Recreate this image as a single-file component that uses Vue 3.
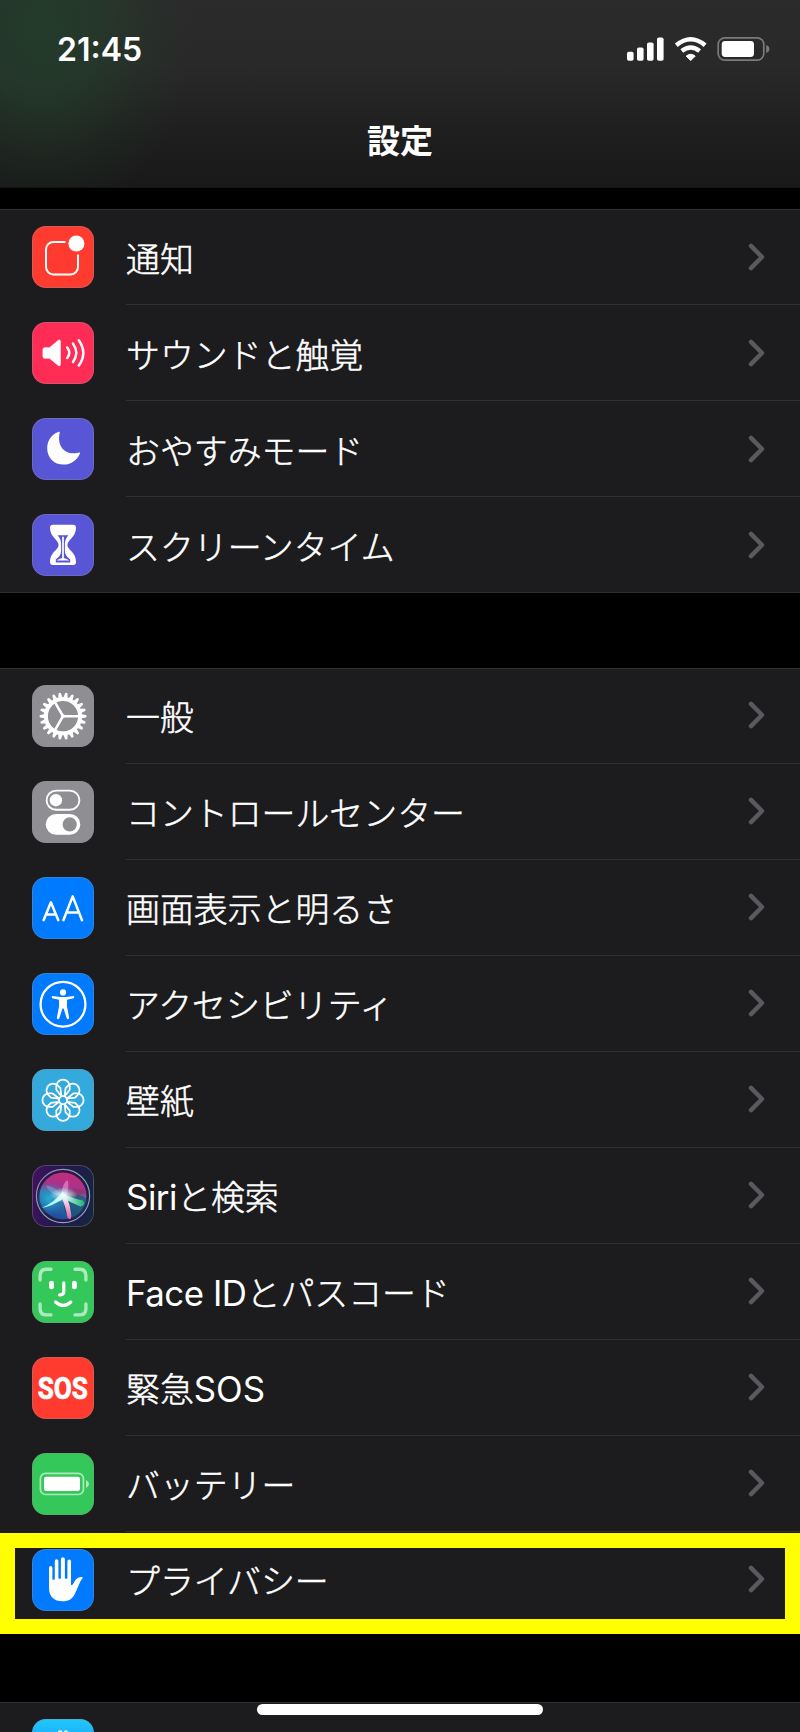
<script setup>
const sections = [
  {
    id: 'alerts',
    rows: [
      { icon: 'bell', text: '通知' },
      { icon: 'sound', text: 'サウンドと触覚' },
      { icon: 'moon', text: 'おやすみモード' },
      { icon: 'hourglass', text: 'スクリーンタイム' }
    ]
  },
  {
    id: 'device',
    rows: [
      { icon: 'gear', text: '一般' },
      { icon: 'toggles', text: 'コントロールセンター' },
      { icon: 'display', text: '画面表示と明るさ' },
      { icon: 'access', text: 'アクセシビリティ' },
      { icon: 'flower', text: '壁紙' },
      { icon: 'siri', lead: 'Siri', text: 'と検索' },
      { icon: 'face', lead: 'Face ID', text: 'とパスコード' },
      { icon: 'sos', text: '緊急', tail: 'SOS' },
      { icon: 'battery', text: 'バッテリー' },
      { icon: 'hand', text: 'プライバシー', marked: true }
    ]
  },
  { id: 'store', rows: [{ icon: 'store', text: '' }] }
]
const teeth = Array.from({ length: 22 }, (_, i) => (i * 360) / 22)
const petals = Array.from({ length: 8 }, (_, i) => i * 45)
</script>

<template>
  <div class="phone">
    <header class="top">
      <div class="status">
        <span class="clock">21:45</span>
        <svg class="signals" width="144" height="26" viewBox="0 0 144 26">
          <g fill="#fff">
            <rect x="1" y="15.7" width="6.6" height="9.1" rx="1.8" />
            <rect x="11" y="11.4" width="6.6" height="13.4" rx="1.8" />
            <rect x="21" y="6.5" width="6.6" height="18.3" rx="1.8" />
            <rect x="31" y="1.5" width="6.6" height="23.3" rx="1.8" />
            <path d="M64.7 24.6 L60.2 20.1 Q64.7 16.4 69.2 20.1Z" stroke="#fff" stroke-width="1" stroke-linejoin="round" />
          </g>
          <g fill="none" stroke="#fff" stroke-width="4.4">
            <path d="M50.3 9.2 Q64.7 -2.8 79.1 9.2" />
            <path d="M55.8 15 Q64.7 7.8 73.6 15" />
          </g>
          <rect x="92.2" y="1.8" width="45.6" height="22.4" rx="6.6" fill="none" stroke="#7b7b7b" stroke-width="1.7" />
          <rect x="95.7" y="5" width="32.3" height="16" rx="3.4" fill="#fff" />
          <path d="M140.2 9 Q143.4 10.2 143.4 13 T140.2 17Z" fill="#7b7b7b" />
        </svg>
      </div>
      <h1 class="title">設定</h1>
    </header>

    <main class="list">
      <section v-for="s in sections" :key="s.id" class="group" :class="'group-' + s.id">
        <div v-for="r in s.rows" :key="r.icon" class="row">
          <div class="tile" :class="'tile-' + r.icon">
            <svg width="62" height="62" viewBox="0 0 62 62">
              <g v-if="r.icon === 'bell'">
                <path d="M33.5 16H21.5A7.4 7.4 0 0 0 14 23.4V41A7.4 7.4 0 0 0 21.5 48.4H38.6A7.4 7.4 0 0 0 46 41V28.5" fill="none" stroke="#fff" stroke-width="2" />
                <circle cx="44.4" cy="17.5" r="8" fill="#fff" />
              </g>
              <g v-else-if="r.icon === 'sound'">
                <path d="M12.7 25.8H17.5L26.4 18.3Q28.3 17.2 28.3 19.5V42.3Q28.3 44.6 26.4 43.5L17.5 36.2H12.7Q11 36.2 11 34.5V27.5Q11 25.8 12.7 25.8Z" fill="#fff" stroke="#fff" stroke-width=".8" />
                <g fill="none" stroke="#fff" stroke-width="2.5" stroke-linecap="round">
                  <path d="M35.2 25.6Q39.3 31 35.2 36" />
                  <path d="M41 21.6Q47.6 31 41 40" />
                  <path d="M46.8 18.2Q55.8 31 46.8 43.6" />
                </g>
              </g>
              <path v-else-if="r.icon === 'moon'" d="M26.3 14C27.6 13.6 28 14 27.6 15.2C24.8 28.8 33.4 37.8 46.4 34.7C48 34.2 48.3 34.8 47.7 36C44.6 42.8 38.8 46.6 31.5 46.6C22 46.6 15.2 39.6 15.2 30.2C15.2 22.7 19.4 16.5 26.3 14Z" fill="#fff" />
              <g v-else-if="r.icon === 'hourglass'">
                <path d="M21 10.7H41Q44 10.7 44 13.7C44 23 35.4 25.8 35.4 31C35.4 36 44 38 44 47.8Q44 51 41 51H21Q18 51 18 47.8C18 38 26.6 36 26.6 31C26.6 25.8 18 23 18 13.7Q18 10.7 21 10.7Z" fill="#fff" />
                <path d="M25.6 21.2H36.4Q32.9 25 32.9 29.5V37.5Q32.9 41.5 38.2 45.4V48.4H23.8V45.4Q29.1 41.5 29.1 37.5V29.5Q29.1 25 25.6 21.2Z" fill="#5856d6" />
                <path d="M31 22.8V45" stroke="#fff" stroke-width="1.7" />
                <path d="M24.6 46.6Q31 41.4 37.4 46.6Z" fill="#fff" />
              </g>
              <g v-else-if="r.icon === 'gear'" transform="translate(31 31.2)">
                <path v-for="a in teeth" :key="a" :transform="`rotate(${a})`" d="M17.5 -2.3L23 -1.2Q24.2 0 23 1.2L17.5 2.3Z" fill="#fff" />
                <circle r="17.1" fill="none" stroke="#fff" stroke-width="4" />
                <path d="M0 0H17M0 0L-8.3 -14.4M0 0L-8.3 14.4" stroke="#fff" stroke-width="2.6" />
                <circle r="2" fill="#fff" />
              </g>
              <g v-else-if="r.icon === 'toggles'">
                <rect x="14.6" y="9.6" width="32.8" height="19.2" rx="9.6" fill="none" stroke="#fff" stroke-width="1.9" />
                <circle cx="23.9" cy="19.2" r="6.2" fill="#fff" />
                <rect x="13.7" y="33" width="34.6" height="20.8" rx="10.4" fill="#fff" />
                <circle cx="37.7" cy="43.4" r="7.1" fill="#8e8e93" />
              </g>
              <g v-else-if="r.icon === 'display'" fill="none" stroke="#fff" stroke-width="2.5" stroke-linecap="round" stroke-linejoin="round">
                <path d="M11.6 43.2L18.9 25.3L26.3 43.2M14.2 37.6H23.7" />
                <path d="M31.4 43.2L40.7 19.4L50 43.2M34.7 35.6H46.7" />
              </g>
              <g v-else-if="r.icon === 'access'">
                <circle cx="31" cy="31.2" r="22.4" fill="none" stroke="#fff" stroke-width="2.3" />
                <circle cx="31" cy="19.4" r="3.1" fill="#fff" />
                <path d="M20.4 22.9L28 24.1H34L41.6 22.9Q43 23.8 41.8 25.2L35 26.8V33.5L37.2 45Q36.2 47 34.8 45.6L31.6 35.5H30.4L27.2 45.6Q25.8 47 24.8 45L27 33.5V26.8L20.2 25.2Q19 23.8 20.4 22.9Z" fill="#fff" />
              </g>
              <g v-else-if="r.icon === 'flower'" transform="translate(31 31.2)" fill="none" stroke="#fff" stroke-width="1.75" stroke-linejoin="round">
                <path v-for="a in petals" :key="a" :transform="`rotate(${a})`" d="M0 -20.6A6.7 6.7 0 0 1 6.7 -13.9V-10.4L1.7 -4H-1.7L-6.7 -10.4V-13.9A6.7 6.7 0 0 1 0 -20.6Z" />
              </g>
              <g v-else-if="r.icon === 'siri'">
                <defs>
                  <linearGradient id="orb" x1=".6" y1="0" x2=".4" y2="1">
                    <stop offset="0" stop-color="#c52c78" />
                    <stop offset=".3" stop-color="#a5348d" />
                    <stop offset=".52" stop-color="#3a7fae" />
                    <stop offset="1" stop-color="#1b4a9a" />
                  </linearGradient>
                  <radialGradient id="cyan">
                    <stop offset="0" stop-color="#1fb6dc" stop-opacity=".9" />
                    <stop offset="1" stop-color="#1689bd" stop-opacity="0" />
                  </radialGradient>
                  <radialGradient id="flare">
                    <stop offset="0" stop-color="#fff" />
                    <stop offset=".3" stop-color="#d9fbff" stop-opacity=".75" />
                    <stop offset="1" stop-color="#b8f4ff" stop-opacity="0" />
                  </radialGradient>
                  <linearGradient id="rim" x1="0" y1="0" x2="1" y2="1">
                    <stop offset="0" stop-color="#a273b8" />
                    <stop offset=".55" stop-color="#76bda0" />
                    <stop offset="1" stop-color="#8b93d8" />
                  </linearGradient>
                  <linearGradient id="ray-left" x1="0" y1="1" x2="1" y2="0">
                    <stop offset="0" stop-color="#8df5ee" />
                    <stop offset="1" stop-color="#fff" />
                  </linearGradient>
                  <linearGradient id="ray-right" x1="0" y1="0" x2="1" y2="0">
                    <stop offset="0" stop-color="#e8fffa" />
                    <stop offset="1" stop-color="#1fb774" />
                  </linearGradient>
                  <linearGradient id="ray-down" x1="0" y1="0" x2="0" y2="1">
                    <stop offset="0" stop-color="#fff" />
                    <stop offset="1" stop-color="#df5fa4" />
                  </linearGradient>
                  <clipPath id="ball"><circle cx="31" cy="31" r="25.5" /></clipPath>
                </defs>
                <circle cx="31" cy="31" r="26.6" fill="#2b1748" stroke="url(#rim)" stroke-width="1.2" />
                <g clip-path="url(#ball)">
                  <circle cx="31" cy="31" r="23.5" fill="url(#orb)" />
                  <circle cx="17" cy="34" r="16" fill="url(#cyan)" />
                  <ellipse cx="45" cy="42" rx="13" ry="12" fill="#14475e" opacity=".5" />
                  <path d="M31 30Q44 19 54 27Q49 31.5 33 31Z" fill="#8e3562" opacity=".7" />
                  <path d="M31 31Q20 19 14 21Q19 31 31 31Z" fill="#9aa2d8" opacity=".5" />
                  <path d="M29 30Q31 17 35.5 15Q38 21 34 31Z" fill="#ff9bd5" opacity=".55" />
                  <path d="M31 26.5Q23 37 9.5 43Q20 41.5 34 32Z" fill="url(#ray-left)" />
                  <path d="M30 28.5Q42 34 51 35.5Q54.5 40 48.5 41.5Q38 37.5 29 31.5Z" fill="url(#ray-right)" />
                  <path d="M28.6 30Q34 42 35.5 52.5Q39.2 57 39.3 50Q38 39 34 30Z" fill="url(#ray-down)" />
                </g>
                <ellipse cx="31.5" cy="30" rx="14" ry="7.5" fill="url(#flare)" />
              </g>
              <g v-else-if="r.icon === 'face'" fill="none" stroke="#fff" stroke-linecap="round">
                <path opacity=".6" stroke-width="3.4" d="M8.1 19V14.8Q8.1 8.3 14.6 8.3H19M43 8.3H47.4Q53.9 8.3 53.9 14.8V19M53.9 43V47.4Q53.9 53.9 47.4 53.9H43M19 53.9H14.6Q8.1 53.9 8.1 47.4V43" />
                <path stroke-width="4.9" d="M19.5 22.2V25.9M42.4 22.2V25.9" />
                <path stroke-width="3.2" d="M31.8 21.8V30.4Q31.8 33.9 27.6 33.9M23.6 41Q31.2 47.8 38.8 41" />
              </g>
              <text v-else-if="r.icon === 'sos'" class="sos-text" transform="translate(5.7 42.3) scale(.83 1)" font-size="31.5">SOS</text>
              <g v-else-if="r.icon === 'battery'">
                <g opacity=".6">
                  <rect x="8.4" y="20.3" width="43" height="21.2" rx="5.2" fill="none" stroke="#fff" stroke-width="1.7" />
                  <path d="M54 27Q57 28.4 57 31T54 35Z" fill="#fff" />
                </g>
                <rect x="12" y="23.7" width="36" height="14.4" rx="2.4" fill="#fff" />
              </g>
              <path v-else-if="r.icon === 'hand'" fill="#fff" d="M17 18.8Q17 17 18.7 17T20.4 18.8V30.4Q21.6 31.4 22.8 30.2V12Q22.8 10.2 24.6 10.2T26.4 12V29.2Q27.7 30.2 28.9 29.2V10.2Q28.9 8.3 30.9 8.3T32.9 10.2V29.2Q34.2 30.3 35.4 29.4V12.2Q35.4 10.4 37.2 10.4T39 12.2V36Q40.4 36.4 41.4 34.4L43.8 30.6Q46.4 27.4 50 28Q51.2 28.4 50.4 29.6Q48.4 31.8 47 35.4L43.4 43.8C41 49.8 37 52.3 30.6 52.3C22 52.3 17 47.6 17 39Z" />
              <g v-else-if="r.icon === 'store'" stroke="#fff" stroke-width="4.6" stroke-linecap="round">
                <path d="M28.2 13.6L41 36M34 13.6L20.6 36" />
              </g>
            </svg>
          </div>
          <div class="cell">
            <span class="label"><span v-if="r.lead" class="latin" :class="'latin-' + r.icon">{{ r.lead }}</span>{{ r.text }}<span v-if="r.tail" class="latin">{{ r.tail }}</span></span>
            <svg v-if="r.text" class="chevron" width="18" height="28" viewBox="0 0 18 28">
              <path d="M4 2.9L15 14L4 25.1" fill="none" stroke="#5a5a5e" stroke-width="4.4" stroke-linecap="round" stroke-linejoin="round" />
            </svg>
          </div>
          <div v-if="r.marked" class="marker"></div>
        </div>
      </section>
    </main>
    <div class="home-bar"></div>
  </div>
</template>

<style>
body {
  background: #000;
}
</style>

<style scoped>
.phone {
  position: relative;
  width: 800px;
  height: 1732px;
  overflow: hidden;
  background: #000;
  color: #fff;
  font-family: "Noto Sans CJK JP", sans-serif;
}
.top {
  box-sizing: border-box;
  height: 188px;
  border-bottom: 1px solid #141414;
  background:
    radial-gradient(ellipse 150px 190px at 42px 30px, rgba(33, 66, 43, 0.7) 0%, rgba(33, 66, 43, 0.56) 35%, rgba(33, 66, 43, 0.2) 70%, rgba(33, 66, 43, 0) 100%),
    linear-gradient(#2b2b2b 0%, #292929 35%, #1f1f1f 70%, #191919 100%);
}
.status {
  display: flex;
  justify-content: space-between;
  align-items: center;
  height: 98px;
  padding: 0 30px 0 57px;
}
.clock {
  padding-top: 2px;
  font: 600 32px/40px Inter, sans-serif;
}
.title {
  margin: 18px 0 0;
  font-size: 33px;
  line-height: 46px;
  font-weight: 700;
  text-align: center;
}
.list {
  display: flex;
  flex-direction: column;
  gap: 75px;
  padding-top: 21px;
}
.group {
  background: #1c1c1e;
  box-shadow: inset 0 1px #303032, inset 0 -1px #303032;
}
.group:last-child {
  margin-top: -1px;
}
.row {
  position: relative;
  display: flex;
  align-items: center;
  gap: 32px;
  height: 96px;
  padding-left: 32px;
}
.tile {
  flex: none;
  width: 62px;
  height: 62px;
  border-radius: 14px;
  overflow: hidden;
  position: relative;
}
.group-device .tile {
  margin-bottom: 1px;
}
.tile::after {
  content: "";
  position: absolute;
  inset: 0;
  border-radius: 14px;
  box-shadow: inset 0 0 0 1px rgba(142, 142, 147, 0.4);
}
.tile svg {
  display: block;
}
.tile-bell,
.tile-sos {
  background: #ff3b30;
}
.tile-sound {
  background: #ff2d55;
}
.tile-moon,
.tile-hourglass {
  background: #5856d6;
}
.tile-gear,
.tile-toggles {
  background: #8e8e93;
}
.tile-display,
.tile-access,
.tile-hand {
  background: #007aff;
}
.tile-flower {
  background: #34aadc;
}
.tile-siri {
  background: linear-gradient(100deg, #43125c 0%, #241750 45%, #16263f 100%);
}
.tile-face,
.tile-battery {
  background: #34c759;
}
.tile-store {
  background: linear-gradient(#1fc8fd, #1b72f1);
}
.sos-text {
  fill: #fff;
  stroke: #fff;
  stroke-width: 0.7px;
  font-family: Roboto, sans-serif;
  font-weight: 700;
}
.cell {
  flex: 1;
  display: flex;
  justify-content: space-between;
  align-items: center;
  box-sizing: border-box;
  height: 96px;
  padding: 1px 35px 0 0;
  border-bottom: 1px solid #303032;
}
.label {
  font-size: 33.9px;
  line-height: 48px;
  font-weight: 300;
  -webkit-text-stroke: 0.5px #fff;
  white-space: nowrap;
}
.group-alerts .label {
  padding-top: 1px;
}
.group-device .chevron {
  margin-bottom: 2px;
}
.latin {
  font-family: Inter, sans-serif;
  font-size: 34.8px;
  font-weight: 400;
  line-height: 1;
  -webkit-text-stroke: 0;
}
.latin-siri,
.latin-face {
  letter-spacing: -0.45px;
}
.marker {
  position: absolute;
  z-index: 1;
  left: 0;
  top: 1px;
  box-sizing: border-box;
  width: 800px;
  height: 101px;
  border: 15px solid #ff0;
}
.home-bar {
  position: absolute;
  left: 257px;
  top: 1704px;
  width: 286px;
  height: 11px;
  border-radius: 6px;
  background: #fff;
}
</style>
